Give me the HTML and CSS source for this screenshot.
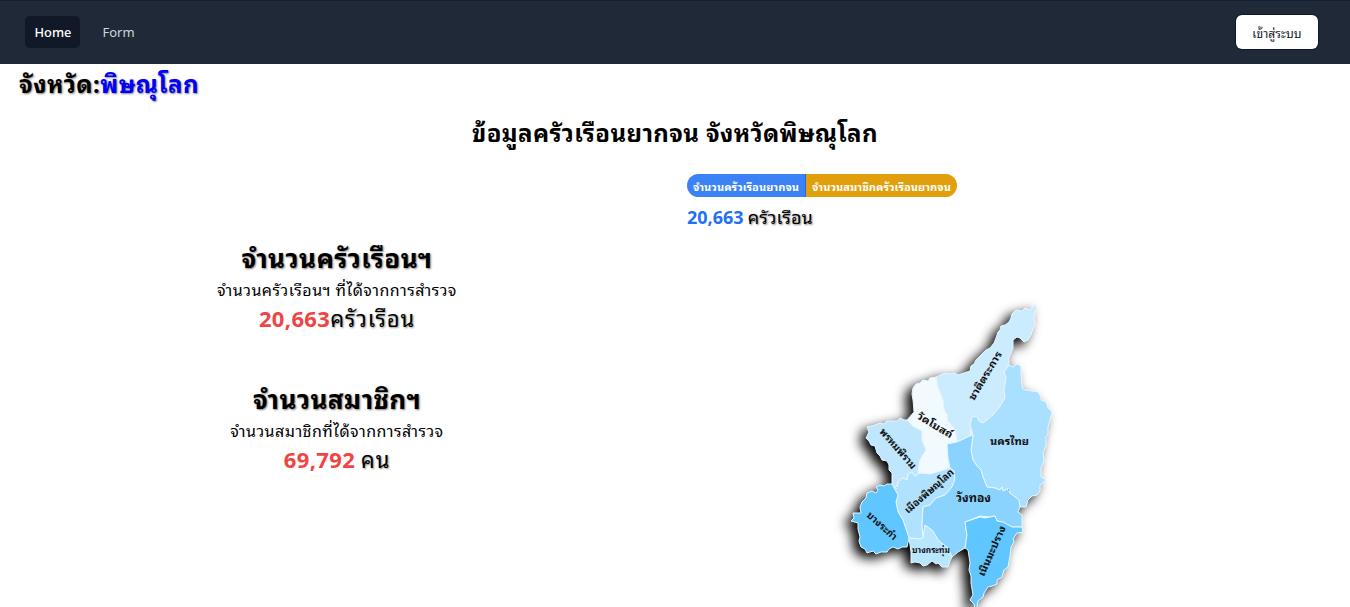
FILE: index.html
```html
<!DOCTYPE html>
<html lang="th">
<head>
<meta charset="utf-8">
<title>ข้อมูลครัวเรือนยากจน</title>
<link rel="stylesheet" href="styles.css">
</head>
<body>
<nav class="navbar">
  <div class="nav-links">
    <a class="nav-link active">Home</a>
    <a class="nav-link">Form</a>
  </div>
  <button class="login">เข้าสู่ระบบ</button>
</nav>
<h2 class="province">จังหวัด:<span class="province-name">พิษณุโลก</span></h2>
<h1 class="title">ข้อมูลครัวเรือนยากจน จังหวัดพิษณุโลก</h1>
<main class="content">
  <section class="stats">
    <div class="stat">
      <h3 class="stat-title">จำนวนครัวเรือนฯ</h3>
      <p class="stat-note">จำนวนครัวเรือนฯ ที่ได้จากการสำรวจ</p>
      <p class="stat-value"><b>20,663</b><span class="unit">ครัวเรือน</span></p>
    </div>
    <div class="stat">
      <h3 class="stat-title">จำนวนสมาชิกฯ</h3>
      <p class="stat-note">จำนวนสมาชิกที่ได้จากการสำรวจ</p>
      <p class="stat-value"><b>69,792</b> <span class="unit">คน</span></p>
    </div>
  </section>
  <section class="map-panel">
    <div class="tabs"><button class="tab tab-blue">จำนวนครัวเรือนยากจน</button><button class="tab tab-amber">จำนวนสมาชิกครัวเรือนยากจน</button></div>
    <p class="total"><b>20,663</b><span>ครัวเรือน</span></p>
    <svg class="map" viewBox="830 290 250 317" width="250" height="317">
      <g class="districts">
        <path fill="#d9f1ff" d="M920 420L965 425 985 410 1005 440 1005 510 985 540 930 530 905 515 903 488 912 465Z"/>
        <path fill="#cbecff" d="M1035 304L1037 308 1035 312 1034 318 1035 325 1033 329 1031 335 1028 340 1024 342 1020 338 1017 337 1013 340 1013 348 1009 358 1009 365 1004 372 1006 378 1004 390 1005 398 999 408 993 415 983 423 979 421 977 416 972 417 972 423 970 436 957 442 955 430 947 420 947 414 944 410 943 400 939 390 937 384 936 377 945 373 949 374 955 373 958 375 964 373 970 371 971 366 974 364 976 360 981 355 986 350 990 348 994 343 996 338 998 332 1000 330 1001 326 1005 325 1009 322 1011 318 1012 314 1016 310 1022 311 1025 308 1030 310 1033 307Z"/>
        <path fill="#aae0ff" d="M1009 365L1013 367 1017 364 1021 366 1021 375 1022 385 1023 389 1026 390 1032 391 1038 392 1041 397 1041 400 1046 402 1048 408 1052 412 1050 420 1048 427 1048 434 1046 437 1046 445 1043 453 1044 460 1041 468 1041 477 1046 480 1040 485 1040 491 1037 495 1032 496 1028 500 1026 507 1020 507 1019 500 1015 497 1010 493 1009 489 1007 489 1003 491 1002 487 1000 490 995 488 987 487 985 481 983 477 981 470 977 466 973 460 971 450 973 435 970 425 972 417 977 416 979 421 983 423 993 415 999 408 1005 398 1004 390 1006 378 1004 372Z"/>
        <path fill="#f0faff" d="M913 388L916 384 920 383 923 380 928 381 930 378 936 377 937 384 939 390 943 400 944 410 947 414 947 420 955 430 957 442 948 444 947 457 950 468 946 471 930 474 918 472 920 460 926 450 922 440 922 431 914 427 907 420 914 412 913 400 912 394Z"/>
        <path fill="#bee7ff" d="M907 420L904 420 900 418 897 421 893 421 887 421 884 424 880 423 875 425 867 427 869 432 866 438 869 441 871 445 875 446 877 453 880 456 882 460 887 461 889 465 889 470 892 473 892 486 896 488 898 482 903 478 907 480 908 474 912 472 915 476 919 475 918 472 920 460 926 450 922 440 922 431 914 427Z"/>
        <path fill="#b0e2ff" d="M892 485L897 489 898 482 903 478 907 480 908 474 912 472 915 476 920 473 930 474 940 471 950 468 954 471 955 479 952 487 945 495 936 498 930 505 927 506 923 507 922 525 923 538 920 539 909 538 907 532 903 520 898 512 896 502Z"/>
        <path fill="#8ad3ff" d="M947 444L957 442 970 436 973 435 971 450 973 460 977 466 981 470 983 477 987 487 995 488 1000 490 1002 487 1003 491 1007 489 1010 493 1019 500 1020 507 1018 512 1022 515 1022 527 1012 527 1003 522 997 521 995 516 990 517 980 516 965 522 967 535 965 548 958 552 952 557 948 548 938 540 933 531 925 525 923 538 922 525 923 507 930 505 936 498 945 495 952 487 955 479 954 471 950 468 948 458Z"/>
        <path fill="#60c6ff" d="M892 484L887 484 884 486 880 485 876 487 878 490 876 493 872 491 867 493 866 498 862 502 860 507 861 513 853 513 854 518 851 521 858 523 858 529 860 537 859 541 861 547 865 549 867 553 873 551 876 554 881 552 887 552 889 549 893 547 898 549 902 547 907 547 909 538 907 532 903 520 898 512 896 502 898 495Z"/>
        <path fill="#b9e6ff" d="M909 538L911 552 911 563 915 562 920 563 923 566 927 565 932 561 936 564 938 563 942 567 948 567 950 561 952 557 948 548 938 540 933 531 925 525 923 538 920 539Z"/>
        <path fill="#60c6ff" d="M965 522L980 517 985 518 995 516 997 521 1003 522 1012 527 1022 527 1023 532 1017 533 1013 539 1014 542 1011 547 1010 556 1008 567 1004 570 1002 577 997 580 997 584 992 586 988 587 984 593 983 597 978 601 976 612 974 604 970 600 973 595 971 583 971 576 969 570 970 563 968 550 965 548 967 535Z"/>
      </g>
      <g class="labels">
        <text transform="translate(974 401) rotate(-59)" font-size="10" textLength="55" lengthAdjust="spacingAndGlyphs">ชาติตระการ</text>
        <text transform="translate(990 445)" font-size="10" textLength="39" lengthAdjust="spacingAndGlyphs">นครไทย</text>
        <text transform="translate(916 418) rotate(31)" font-size="10" textLength="40" lengthAdjust="spacingAndGlyphs">วัดโบสถ์</text>
        <text transform="translate(879 432) rotate(49)" font-size="10" textLength="50" lengthAdjust="spacingAndGlyphs">พรหมพิราม</text>
        <text transform="translate(908 514) rotate(-41)" font-size="10" textLength="62" lengthAdjust="spacingAndGlyphs">เมืองพิษณุโลก</text>
        <text transform="translate(956 502)" font-size="12" textLength="35" lengthAdjust="spacingAndGlyphs">วังทอง</text>
        <text transform="translate(866 516) rotate(42)" font-size="10" textLength="37" lengthAdjust="spacingAndGlyphs">บางระกำ</text>
        <text transform="translate(912 553)" font-size="8" textLength="38" lengthAdjust="spacingAndGlyphs">บางกระทุ่ม</text>
        <text transform="translate(984 577) rotate(-66)" font-size="10" textLength="54" lengthAdjust="spacingAndGlyphs">เนินมะปราง</text>
      </g>
    </svg>
  </section>
</main>
</body>
</html>
```
FILE: styles.css
```css
* { box-sizing: border-box; }
body { margin: 0; height: 607px; overflow: hidden; background: #fff; color: #000; font-family: "Noto Sans", "Noto Sans Thai Looped", "Noto Sans Thai", "Open Sans", sans-serif; }
h1, h2, h3, p { margin: 0; white-space: nowrap; }
button { border: 0; font-family: inherit; white-space: nowrap; }
.navbar { height: 64px; padding: 0 32px 1px 25px; background: #1f2937; border-top: 1px solid #172033; display: flex; align-items: center; justify-content: space-between; }
.nav-links { display: flex; gap: 13px; }
.nav-link { height: 32px; padding: 0 9.5px; border-radius: 5px; color: #d1d5db; font-size: 13px; line-height: 32px; }
.nav-link.active { width: 55px; background: #111827; color: #fff; font-weight: 500; font-size: 12.8px; }
.login { width: 82px; height: 34px; padding: 0; border-radius: 6px; background: #fff; color: #111827; font-size: 12px; letter-spacing: .1px; box-shadow: 0 0 0 1px #11162d; }
.province { height: 40px; padding-left: 19px; font-size: 24px; line-height: 40px; letter-spacing: .45px; text-shadow: 1px 1px 2px rgba(0,0,0,.5); }
.province-name { color: #00f; }
.title { height: 58px; font-size: 24px; line-height: 58px; letter-spacing: .37px; text-align: center; }
.content { display: grid; grid-template-columns: 674px 1fr; }
.stats { padding-top: 79px; text-align: center; }
.stat { height: 141px; }
.stat-title { height: 34px; font-size: 26px; line-height: 34px; letter-spacing: .45px; text-shadow: 1px 1px 2px rgba(0,0,0,.5); }
.stat-note { height: 28px; font-size: 16px; line-height: 30px; letter-spacing: .48px; }
.stat-value { height: 30px; font-size: 22px; line-height: 31px; text-shadow: 1px 1px 2px rgba(0,0,0,.45); }
.stat-value b { color: #ef4444; text-shadow: none; letter-spacing: .35px; }
.unit { letter-spacing: .85px; }
.map-panel { padding: 12px 0 0 13px; }
.tabs { display: flex; height: 23px; }
.tab { height: 23px; padding: 0; color: #fff; font-size: 11.1px; font-weight: 700; line-height: 25px; }
.tab-blue { width: 119px; background: #3b82f6; border-radius: 12px 0 0 12px; border-right: 1px solid #2563eb; }
.tab-amber { width: 151px; background: #e19f0c; border-radius: 0 12px 12px 0; }
.total { height: 40px; font-size: 18px; line-height: 41px; text-shadow: 1px 1px 2px rgba(0,0,0,.5); }
.total b { color: #2370f5; text-shadow: none; margin-right: 4px; }
.total span { letter-spacing: .1px; }
.map { display: block; margin: 53px 0 0 143px; overflow: visible; }
.districts { stroke: #e8f7ff; stroke-width: 1; stroke-linejoin: round; filter: drop-shadow(-6px 5px 6px #000); }
.labels { font-weight: 700; fill: #111; }
```
